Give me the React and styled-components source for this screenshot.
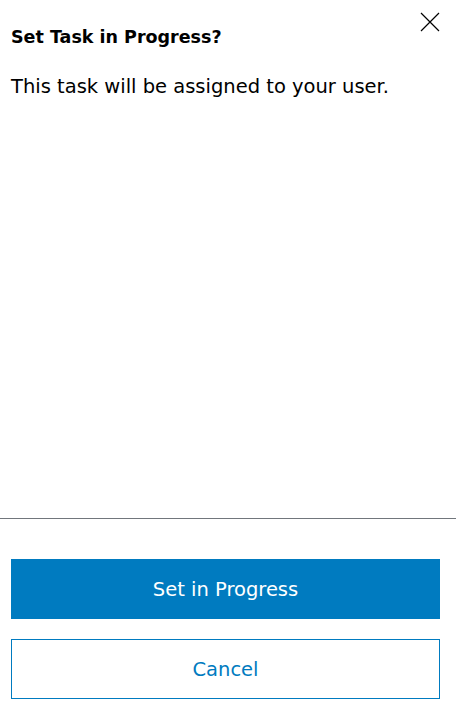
import React from "react";
import styled, { createGlobalStyle } from "styled-components";

const GlobalStyle = createGlobalStyle`
  html, body {
    margin: 0;
    padding: 0;
    background: #ffffff;
  }
  body {
    font-family: "DejaVu Sans", "Noto Sans", sans-serif;
    color: #000000;
  }
`;

const Dialog = styled.div`
  height: 708px;
  display: flex;
  flex-direction: column;
  box-sizing: border-box;
`;

const Header = styled.header`
  display: flex;
  align-items: flex-start;
  justify-content: space-between;
  padding: 12px 16px 0 11px;
`;

const Title = styled.h2`
  margin: 13px 0 0;
  font-size: 17.5px;
  line-height: 24px;
  font-weight: 700;
`;

const CloseButton = styled.button`
  background: none;
  border: none;
  padding: 0;
  margin: 0;
  width: 20px;
  height: 20px;
  cursor: pointer;
  display: flex;
`;

const Body = styled.p`
  flex: 1;
  margin: 0;
  padding: 24px 16px 0 11px;
  font-size: 19.5px;
  line-height: 28px;
`;

const Divider = styled.hr`
  margin: 0;
  border: none;
  border-top: 1px solid #71767c;
`;

const Footer = styled.footer`
  display: flex;
  flex-direction: column;
  gap: 20px;
  padding: 40px 16px 9px 11px;
`;

const ActionButton = styled.button`
  height: 60px;
  width: 100%;
  box-sizing: border-box;
  font-family: "DejaVu Sans", "Noto Sans", sans-serif;
  font-size: 19.5px;
  cursor: pointer;
  background: ${({ $primary }) => ($primary ? "#007bc0" : "#ffffff")};
  color: ${({ $primary }) => ($primary ? "#ffffff" : "#007bc0")};
  border: 1px solid #007bc0;
`;

const App = () => (
  <>
    <GlobalStyle />
    <Dialog>
      <Header>
        <Title>Set Task in Progress?</Title>
        <CloseButton aria-label="Close">
          <svg width="20" height="20" viewBox="0 0 20 20">
            <path d="M1 1L19 19M19 1L1 19" stroke="#000" strokeWidth="1.2" fill="none" />
          </svg>
        </CloseButton>
      </Header>
      <Body>This task will be assigned to your user.</Body>
      <Divider />
      <Footer>
        <ActionButton $primary>Set in Progress</ActionButton>
        <ActionButton>Cancel</ActionButton>
      </Footer>
    </Dialog>
  </>
);

export default App;
